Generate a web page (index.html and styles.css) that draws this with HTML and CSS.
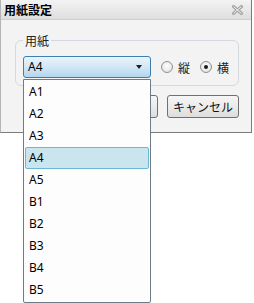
FILE: index.html
```html
<!DOCTYPE html>
<html lang="ja">
<head>
    <meta charset="UTF-8">
    <title>用紙設定</title>
    <link rel="stylesheet" href="styles.css">
</head>
<body>
<div class="window">
    <div class="titlebar">
        <span class="title">用紙設定</span>
        <svg class="close" width="11" height="10" viewBox="0 0 11 10">
            <path d="M1.5 1.5 L9.5 8.5 M9.5 1.5 L1.5 8.5" stroke="#a3a3a3" stroke-width="3" stroke-linecap="square"/>
            <path d="M1.5 1.5 L9.5 8.5 M9.5 1.5 L1.5 8.5" stroke="#f4f4f4" stroke-width="1"/>
        </svg>
    </div>
    <div class="content">
        <fieldset class="group">
            <legend>用紙</legend>
            <div class="combo">
                <span class="combo-text">A4</span>
                <span class="arrow"></span>
            </div>
            <label class="radio"><span class="circle"></span>縦</label>
            <label class="radio checked"><span class="circle"></span>横</label>
        </fieldset>
        <div class="buttons">
            <button class="btn">OK</button>
            <button class="btn">キャンセル</button>
        </div>
    </div>
</div>
<ul class="dropdown">
    <li>A1</li>
    <li>A2</li>
    <li>A3</li>
    <li class="selected">A4</li>
    <li>A5</li>
    <li>B1</li>
    <li>B2</li>
    <li>B3</li>
    <li>B4</li>
    <li>B5</li>
</ul>
</body>
</html>
```
FILE: styles.css
```css
* {
    margin: 0;
    padding: 0;
    box-sizing: border-box;
    list-style: none;
}
html {
    height: 100%;
}
body {
    background: #fff;
    font-family: "Noto Sans", "Noto Sans CJK JP", sans-serif;
    font-size: 12px;
    color: #000;
    position: relative;
    min-height: 303px;
}
.window {
    width: 252px;
    background: #f3f3f3;
    border-left: 1px solid #b4b4b4;
    border-right: 1px solid #7c7c7c;
    border-bottom: 1px solid #7c7c7c;
}
.titlebar {
    height: 20px;
    display: flex;
    align-items: center;
    justify-content: space-between;
    padding: 0 8px 0 3px;
    background: linear-gradient(#f3f3f3, #dedede);
    border-bottom: 1px solid #cfcfcf;
}
.title {
    font-family: "Noto Sans CJK JP", sans-serif;
    font-weight: bold;
    font-size: 12px;
    line-height: 14px;
}
.content {
    padding: 13px 11px 14px 14px;
}
.group {
    width: 224px;
    border: 1px solid #d3d9de;
    border-radius: 6px;
    padding: 0 7px 7px 7px;
    display: flex;
    align-items: center;
}
.group legend {
    margin-left: 0;
    padding: 0 2px;
    font-family: "Noto Sans CJK JP", sans-serif;
    font-size: 12px;
    line-height: 15px;
    color: #222;
    margin-bottom: 8px;
}
.combo {
    width: 128px;
    height: 22px;
    border: 1px solid #3c7fb1;
    border-radius: 3px;
    background: linear-gradient(#eaf4fc, #d2e7f6 50%, #b2d6ef);
    display: flex;
    align-items: center;
    justify-content: space-between;
    padding: 0 8px 0 4px;
}
.combo-text {
    line-height: 14px;
}
.arrow {
    width: 0;
    height: 0;
    border-left: 3.5px solid transparent;
    border-right: 3.5px solid transparent;
    border-top: 4px solid #1e1e1e;
}
.radio {
    display: flex;
    align-items: center;
    margin-left: 10px;
    font-family: "Noto Sans CJK JP", sans-serif;
    font-size: 12px;
    color: #222;
}
.circle {
    width: 12px;
    height: 12px;
    border-radius: 50%;
    border: 1px solid #8e9194;
    background: radial-gradient(circle at 50% 40%, #fff, #e6e6e6 70%, #cfd3d6);
    margin-right: 5px;
    display: flex;
    align-items: center;
    justify-content: center;
}
.checked .circle::after {
    content: "";
    width: 4px;
    height: 4px;
    border-radius: 50%;
    background: #1a1a1a;
}
.buttons {
    display: flex;
    justify-content: flex-end;
    gap: 9px;
    margin-top: 9px;
    padding-right: 1px;
}
.btn {
    width: 72px;
    height: 23px;
    border: 1px solid #707070;
    border-radius: 3px;
    background: linear-gradient(#f6f6f6, #ebebeb 50%, #dddddd);
    font-family: "Noto Sans CJK JP", sans-serif;
    font-size: 12px;
    color: #111;
}
.dropdown {
    position: absolute;
    left: 23px;
    top: 79px;
    width: 128px;
    border: 1px solid #6f7b86;
    border-radius: 0 0 2px 2px;
    background: #fdfdfd;
    padding: 1px;
}
.dropdown li {
    height: 22px;
    line-height: 20px;
    padding-left: 3px;
    border: 1px solid transparent;
    border-radius: 2px;
}
.dropdown li.selected {
    background: #cbe5ee;
    border-color: #6ab9d4;
}
```
